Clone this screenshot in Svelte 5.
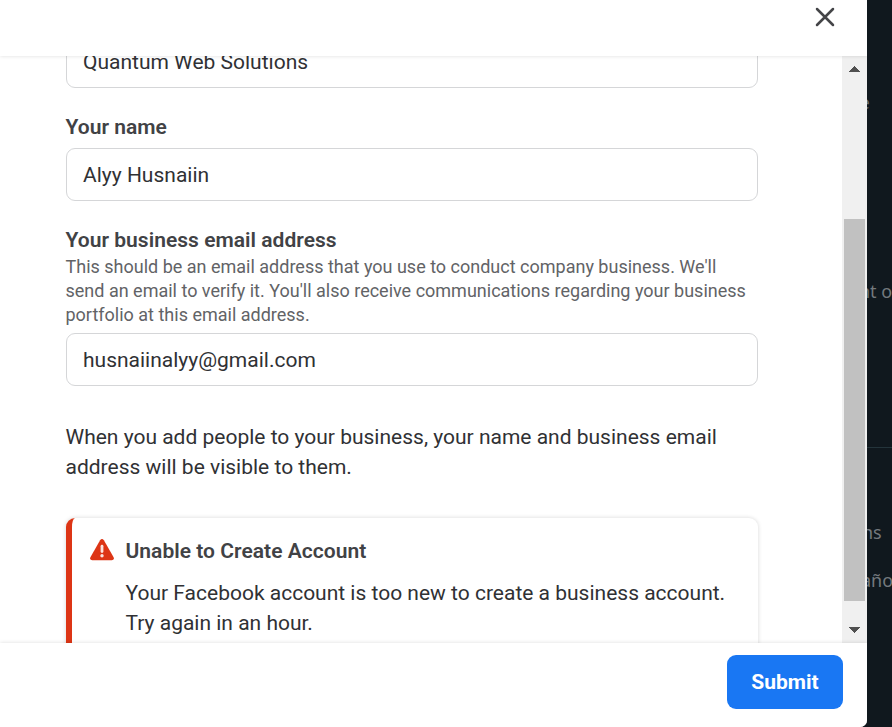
<script>
  const help = [
    "This should be an email address that you use to conduct company business. We'll",
    "send an email to verify it. You'll also receive communications regarding your business",
    'portfolio at this email address.'
  ];
  const notice = [
    'When you add people to your business, your name and business email',
    'address will be visible to them.'
  ];
  const error = [
    'Your Facebook account is too new to create a business account.',
    'Try again in an hour.'
  ];
</script>

<div class="page">
  <section class="modal">
    <header>
      <svg class="close" width="20" height="20" viewBox="0 0 20 20" aria-label="Close">
        <path d="M2 2 L18 18 M18 2 L2 18" fill="none" stroke="#444548" stroke-width="2.5" stroke-linecap="round" />
      </svg>
    </header>

    <div class="body">
      <div class="content">
        <div class="field first"><span>Quantum Web Solutions</span></div>
        <h3 class="l1"><span>Your name</span></h3>
        <div class="field"><span>Alyy Husnaiin</span></div>
        <h3 class="l2"><span>Your business email address</span></h3>
        <p class="help">{#each help as line}<span>{line}</span>{/each}</p>
        <div class="field"><span>husnaiinalyy@gmail.com</span></div>
        <p class="notice">{#each notice as line}<span>{line}</span>{/each}</p>
        <div class="alert">
          <svg class="warn" width="24" height="22" viewBox="0 0 24 22">
            <path d="M10.1 1.3 Q12 -1.1 13.9 1.3 L23.6 18.2 Q24.6 21 21.7 21.2 H2.3 Q-.6 21 .4 18.2 Z" fill="#dd3515" />
            <path d="M12 7.2 V12.5" stroke="#fbe3de" stroke-width="2.8" stroke-linecap="round" />
            <circle cx="12" cy="16.7" r="1.7" fill="#fbe3de" />
          </svg>
          <div>
            <h4><span>Unable to Create Account</span></h4>
            <p class="error">{#each error as line}<span>{line}</span>{/each}</p>
          </div>
        </div>
      </div>
      <div class="scrollbar">
        <svg width="11" height="6" viewBox="0 0 11 6" shape-rendering="crispEdges"><path d="M0 6 L5.5 0 L11 6Z" fill="#505050" /></svg>
        <div class="thumb"></div>
        <svg width="11" height="6" viewBox="0 0 11 6" shape-rendering="crispEdges"><path d="M0 0 L5.5 6 L11 0Z" fill="#505050" /></svg>
      </div>
    </div>

    <footer><button>Submit</button></footer>
  </section>

  <aside>
    <span class="a1">e</span>
    <span class="a2">nt o</span>
    <div class="rule"></div>
    <span class="a3">ns</span>
    <span class="a4">año</span>
  </aside>
</div>

<style>
  .page {
    display: flex;
    width: 892px;
    height: 727px;
    overflow: hidden;
    background: #10181e;
    font-family: Roboto, sans-serif;
    color: #303134;
  }
  .modal {
    display: flex;
    flex-direction: column;
    width: 867px;
    flex: none;
    background: #fff;
    border-bottom-right-radius: 7px;
    overflow: hidden;
  }
  header {
    height: 56px;
    flex: none;
    box-sizing: border-box;
    display: flex;
    justify-content: flex-end;
    padding: 7px 32px 0 0;
    background: #fff;
    box-shadow: 0 0 4px rgba(0, 0, 0, 0.14);
    z-index: 1;
  }
  .body { display: flex; height: 587px; flex: none; overflow: hidden; }
  .content { width: 842px; flex: none; padding-left: 66px; box-sizing: border-box; }
  .field {
    width: 692px;
    height: 53px;
    box-sizing: border-box;
    border: 1px solid #d5d6d8;
    border-radius: 9px;
    padding-left: 16px;
    line-height: 52px;
    font-size: 21px;
    white-space: nowrap;
  }
  .first { margin-top: -21px; }
  h3, h4, p { margin: 0; white-space: nowrap; }
  p span { display: block; width: max-content; }
  h3, h4 { font-size: 21px; font-weight: 600; line-height: 30px; letter-spacing: 0.03px; color: #414245; }
  h3, h4, p { position: relative; left: -0.5px; }
  .l1 { margin: 24px 0 6px; }
  .l2 { margin-top: 24px; height: 30px; }
  .help { font-size: 18px; line-height: 24px; color: #626366; padding-bottom: 6px; }
  .notice { margin-top: 36px; font-size: 21px; line-height: 30px; }
  .alert {
    display: flex;
    box-sizing: border-box;
    width: 692px;
    height: 180px;
    margin-top: 36px;
    padding: 18px 0 0 18px;
    border-left: 6px solid #dd3515;
    border-radius: 9px;
    box-shadow: 0 0 4px rgba(0, 0, 0, 0.16);
  }
  .warn { flex: none; margin: 3px 12px 0 0; }
  .error { margin-top: 12px; font-size: 21px; line-height: 30px; }
  .scrollbar {
    width: 25px;
    flex: none;
    box-sizing: border-box;
    display: flex;
    flex-direction: column;
    align-items: center;
    justify-content: space-between;
    padding: 10px 0;
    background: #f0f0f0;
  }
  .thumb { width: 21px; height: 382px; margin-top: 121px; background: #c1c1c1; }
  footer {
    flex: 1;
    display: flex;
    justify-content: flex-end;
    padding: 12px 24px 0 0;
    background: #fff;
    box-shadow: 0 0 4px rgba(0, 0, 0, 0.14);
    z-index: 1;
  }
  button {
    width: 116px;
    height: 54px;
    padding: 0;
    border: 0;
    border-radius: 9px;
    background: #1977f3;
    color: #fff;
    font: 700 21px/54px Roboto, sans-serif;
  }
  aside {
    display: flex;
    flex-direction: column;
    width: 25px;
    overflow: hidden;
    font: 18px/24px "Noto Sans", sans-serif;
    color: #74797d;
    white-space: nowrap;
  }
  aside span { display: block; height: 24px; }
  .a1 { margin: 90px 0 0 -7.5px; }
  .a2 { margin: 165px 0 0 -8px; }
  .rule { height: 1px; margin-top: 144px; background: #24343b; }
  .a3 { margin: 72px 0 0 -5px; }
  .a4 { margin: 24px 0 0 -6px; }
</style>
